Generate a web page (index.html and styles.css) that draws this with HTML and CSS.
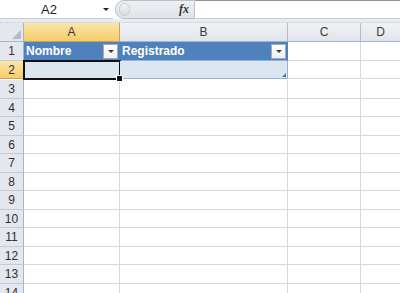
FILE: index.html
```html
<!DOCTYPE html>
<html>
 <head>
  <meta charset="utf-8">
  <title>Libro1</title>
  <link rel="stylesheet" href="styles.css">
 </head>
 <body>
  <div class="formulabar">
   <div class="namebox"><span class="ref">A2</span><span class="drop"></span></div>
   <div class="fxpill"><span class="knob"></span><span class="fx">fx</span></div>
   <div class="fxinput"></div>
  </div>
  <div class="sep"></div>

  <div class="sheet">
   <div class="corner"><span class="tri"></span></div>
   <div class="colhead active">A</div>
   <div class="colhead">B</div>
   <div class="colhead">C</div>
   <div class="colhead last">D</div>

   <div class="rowhead r19">1</div>
   <div class="cell thead r19">Nombre<span class="filter"></span></div>
   <div class="cell thead r19">Registrado<span class="filter"></span></div>
   <div class="cell r19"></div>
   <div class="cell r19 last"></div>

   <div class="rowhead active r18">2</div>
   <div class="cell tbody sel r18"><span class="handle"></span></div>
   <div class="cell tbody r18"><span class="resize"></span></div>
   <div class="cell r18"></div>
   <div class="cell r18 last"></div>

   <div class="rowhead r19">3</div><div class="cell r19"></div><div class="cell r19"></div><div class="cell r19"></div><div class="cell r19 last"></div>
   <div class="rowhead r18">4</div><div class="cell r18"></div><div class="cell r18"></div><div class="cell r18"></div><div class="cell r18 last"></div>
   <div class="rowhead r19">5</div><div class="cell r19"></div><div class="cell r19"></div><div class="cell r19"></div><div class="cell r19 last"></div>
   <div class="rowhead r18">6</div><div class="cell r18"></div><div class="cell r18"></div><div class="cell r18"></div><div class="cell r18 last"></div>
   <div class="rowhead r19">7</div><div class="cell r19"></div><div class="cell r19"></div><div class="cell r19"></div><div class="cell r19 last"></div>
   <div class="rowhead r18">8</div><div class="cell r18"></div><div class="cell r18"></div><div class="cell r18"></div><div class="cell r18 last"></div>
   <div class="rowhead r19">9</div><div class="cell r19"></div><div class="cell r19"></div><div class="cell r19"></div><div class="cell r19 last"></div>
   <div class="rowhead r18">10</div><div class="cell r18"></div><div class="cell r18"></div><div class="cell r18"></div><div class="cell r18 last"></div>
   <div class="rowhead r19">11</div><div class="cell r19"></div><div class="cell r19"></div><div class="cell r19"></div><div class="cell r19 last"></div>
   <div class="rowhead r18">12</div><div class="cell r18"></div><div class="cell r18"></div><div class="cell r18"></div><div class="cell r18 last"></div>
   <div class="rowhead r19">13</div><div class="cell r19"></div><div class="cell r19"></div><div class="cell r19"></div><div class="cell r19 last"></div>
   <div class="rowhead r18">14</div><div class="cell r18"></div><div class="cell r18"></div><div class="cell r18"></div><div class="cell r18 last"></div>
  </div>
 </body>
</html>
```

FILE: styles.css
```css
html, body {
    margin: 0;
    padding: 0;
    width: 400px;
    height: 293px;
    overflow: hidden;
    background: #ffffff;
    font-family: "Liberation Sans", Arial, sans-serif;
}

/* formula bar */
.formulabar {
    display: flex;
    height: 19px;
    background: #ffffff;
}
.namebox {
    width: 113px;
    display: flex;
    align-items: center;
    position: relative;
    box-sizing: border-box;
    border-bottom: 1px solid #c6ccd4;
}
.ref {
    margin-left: 41px;
    font-size: 13px;
    color: #1e1e1e;
}
.drop {
    position: absolute;
    left: 103px;
    top: 8px;
    width: 0;
    height: 0;
    border-left: 3px solid transparent;
    border-right: 3px solid transparent;
    border-top: 3px solid #222;
}
.fxpill {
    width: 80px;
    margin-left: 2px;
    box-sizing: border-box;
    height: 19px;
    display: flex;
    align-items: center;
    justify-content: space-between;
    background: linear-gradient(#eef0f3, #dfe3e8);
    border: 1px solid #b9bfc8;
    border-radius: 9px 0 0 9px;
    padding: 0 5px 0 3px;
}
.knob {
    width: 9px;
    height: 11px;
    border-radius: 6px;
    background: linear-gradient(#f4f4f4, #d9d9d9);
    border: 1px solid #c8cdd4;
}
.fx {
    font-family: "Liberation Serif", serif;
    font-style: italic;
    font-weight: bold;
    font-size: 12px;
    color: #333;
}
.fxinput {
    flex: 1;
    box-sizing: border-box;
    border-top: 1px solid #8e949b;
    border-bottom: 1px solid #c6ccd4;
    background: #ffffff;
}
.sep {
    height: 4px;
    background: #e8ebef;
    border-bottom: 1px dotted #c4c9d0;
    box-sizing: border-box;
}

/* grid */
.sheet {
    display: grid;
    grid-template-columns: 24px 96px 168px 73px 39px;
    grid-auto-rows: auto;
}
.corner, .colhead, .rowhead, .cell {
    box-sizing: border-box;
    border-right: 1px solid #d6d8db;
    border-bottom: 1px solid #d6d8db;
}
.corner {
    height: 19px;
    background: #e4e8ee;
    border-color: #9eb6ce;
    position: relative;
}
.tri {
    position: absolute;
    right: 2px;
    bottom: 2px;
    width: 0;
    height: 0;
    border-left: 9px solid transparent;
    border-bottom: 9px solid #b8bcc2;
}
.colhead {
    height: 19px;
    background: linear-gradient(#f0f2f5, #e1e5eb);
    border-right-color: #b4bcc6;
    border-bottom-color: #9eb6ce;
    font-size: 12px;
    color: #3b3b3b;
    text-align: center;
    line-height: 18px;
}
.colhead.active {
    background: linear-gradient(#fbe5a8, #f6cd6c);
    border-right-color: #c5a35a;
    border-bottom-color: #c5a35a;
}
.rowhead {
    background: #e4e8ee;
    border-right-color: #9eb6ce;
    border-bottom-color: #c3cbd5;
    font-size: 12px;
    color: #2f2f2f;
    text-align: center;
}
.rowhead.active {
    background: linear-gradient(#fbe5a8, #f6cd6c);
    border-bottom-color: #c5a35a;
}
.r19 { height: 19px; line-height: 19px; }
.r18 { height: 18px; line-height: 18px; }
.last { border-right: none; }

.cell {
    position: relative;
    background: #ffffff;
}
.thead {
    background: #4f81bd;
    border-right-color: #4f81bd;
    border-bottom-color: #95b3d7;
    color: #ffffff;
    font-weight: bold;
    font-size: 12px;
    padding-left: 2px;
    line-height: 18px;
}
.filter {
    position: absolute;
    right: 1px;
    top: 2px;
    width: 15px;
    height: 15px;
    box-sizing: border-box;
    background: linear-gradient(#ffffff, #eef0f3);
    border: 1px solid #a7abb0;
}
.filter::after {
    content: "";
    position: absolute;
    left: 4px;
    top: 5px;
    border-left: 3px solid transparent;
    border-right: 3px solid transparent;
    border-top: 3px solid #3c3c3c;
}
.tbody {
    background: #dce6f1;
    border-right-color: #95b3d7;
    border-bottom-color: #95b3d7;
}
.sel {
    box-shadow: inset 0 0 0 2px #111111;
    margin: -1px 0 0 -1px;
    width: 98px;
    height: 20px;
    border: none;
}
.handle {
    position: absolute;
    right: -2px;
    bottom: -2px;
    width: 5px;
    height: 5px;
    background: #111111;
    border: 1px solid #ffffff;
    z-index: 2;
}
.resize {
    position: absolute;
    right: 1px;
    bottom: 1px;
    width: 0;
    height: 0;
    border-left: 4px solid transparent;
    border-bottom: 4px solid #3d6fb4;
}
```
